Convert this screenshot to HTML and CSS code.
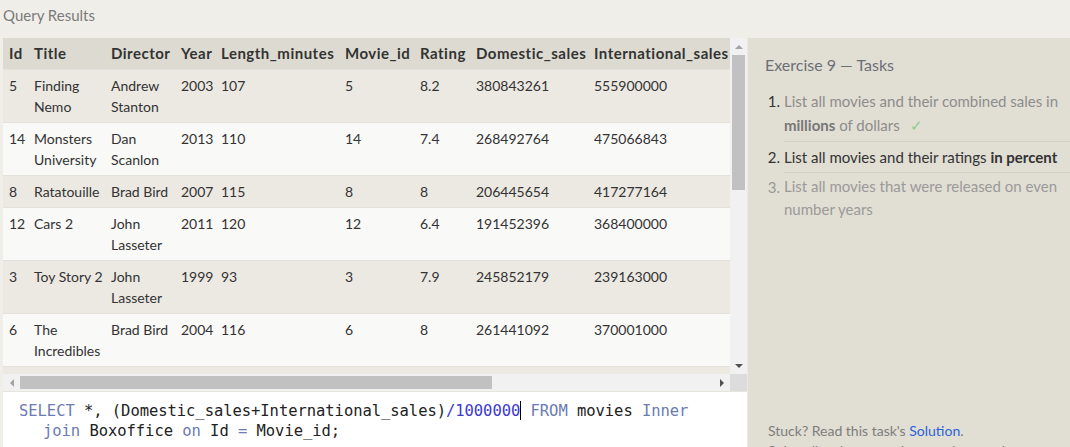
FILE: index.html
```html
<!DOCTYPE html>
<html>
<head>
<meta charset="utf-8">
<link rel="stylesheet" href="styles.css">
</head>
<body>
<div class="topbar">Query Results</div>
<div class="main">
  <div class="left">
    <div class="results">
      <div class="viewport">
        <table class="grid">
          <colgroup>
            <col class="c-id"><col class="c-title"><col class="c-dir"><col class="c-year"><col class="c-len"><col class="c-mid"><col class="c-rat"><col class="c-dom"><col class="c-int"><col class="c-tot">
          </colgroup>
          <thead>
            <tr><th>Id</th><th>Title</th><th>Director</th><th>Year</th><th>Length_minutes</th><th>Movie_id</th><th>Rating</th><th>Domestic_sales</th><th>International_sales</th><th>(Domestic_sales+International_sales)/1000000</th></tr>
          </thead>
          <tbody>
            <tr><td>5</td><td>Finding Nemo</td><td>Andrew Stanton</td><td>2003</td><td>107</td><td>5</td><td>8.2</td><td>380843261</td><td>555900000</td><td>936</td></tr>
            <tr><td>14</td><td>Monsters University</td><td>Dan Scanlon</td><td>2013</td><td>110</td><td>14</td><td>7.4</td><td>268492764</td><td>475066843</td><td>743</td></tr>
            <tr><td>8</td><td>Ratatouille</td><td>Brad Bird</td><td>2007</td><td>115</td><td>8</td><td>8</td><td>206445654</td><td>417277164</td><td>623</td></tr>
            <tr><td>12</td><td>Cars 2</td><td>John Lasseter</td><td>2011</td><td>120</td><td>12</td><td>6.4</td><td>191452396</td><td>368400000</td><td>559</td></tr>
            <tr><td>3</td><td>Toy Story 2</td><td>John Lasseter</td><td>1999</td><td>93</td><td>3</td><td>7.9</td><td>245852179</td><td>239163000</td><td>485</td></tr>
            <tr><td>6</td><td>The Incredibles</td><td>Brad Bird</td><td>2004</td><td>116</td><td>6</td><td>8</td><td>261441092</td><td>370001000</td><td>631</td></tr>
            <tr><td>9</td><td>WALL-E</td><td>Andrew Stanton</td><td>2008</td><td>104</td><td>9</td><td>8.5</td><td>223808164</td><td>297503696</td><td>521</td></tr>
          </tbody>
        </table>
      </div>
      <div class="vbar">
        <div class="arrow up"></div>
        <div class="vtrack"><div class="vthumb"></div></div>
        <div class="arrow down"></div>
      </div>
      <div class="hbar">
        <div class="arrow lft"></div>
        <div class="htrack"><div class="hthumb"></div></div>
        <div class="arrow rgt"></div>
      </div>
      <div class="corner"></div>
    </div>
    <div class="editor">
      <div class="code"><span class="kw">SELECT</span> *, (Domestic_sales+International_sales)<span class="num">/1000000</span><span class="caret"></span> <span class="kw">FROM</span> movies <span class="kw">Inner</span></div>
      <div class="code wrap"><span class="kw">join</span> Boxoffice <span class="kw">on</span> Id <span class="kw">=</span> Movie_id;</div>
    </div>
  </div>
  <div class="panel">
    <div class="ptitle">Exercise 9 — Tasks</div>
    <ol class="tasks">
      <li class="done"><span class="n">1.</span><div class="tx">List all movies and their combined sales in <b>millions</b> of dollars <span class="check">✓</span></div></li>
      <li class="active"><span class="n">2.</span><div class="tx">List all movies and their ratings <b>in percent</b></div></li>
      <li class="todo"><span class="n">3.</span><div class="tx">List all movies that were released on even number years</div></li>
    </ol>
    <div class="footer">
      <p>Stuck? Read this task's <span class="link">Solution</span>.</p>
      <p>Solve all tasks to continue to the next lesson.</p>
    </div>
  </div>
</div>
</body>
</html>
```

FILE: styles.css
```css
html, body {
  margin: 0;
  padding: 0;
}
body {
  background: #f0eee8;
  font-family: Lato, "Open Sans", sans-serif;
  width: 1070px;
  height: 447px;
  overflow: hidden;
}
.topbar {
  height: 38px;
  box-sizing: border-box;
  padding: 5px 0 0 3px;
  font-size: 15px;
  line-height: 20px;
  color: #7b7b7b;
}
.main {
  display: flex;
  height: 409px;
}
.left {
  width: 744px;
  margin-left: 3px;
  display: flex;
  flex-direction: column;
}
.results {
  height: 354px;
  display: grid;
  grid-template-columns: 727px 17px;
  grid-template-rows: 336px 18px;
}
.viewport {
  overflow: hidden;
  background: #f9f9f8;
}
.grid {
  border-collapse: collapse;
  table-layout: fixed;
  width: 1060px;
  font-size: 14px;
  line-height: 21px;
  color: #333;
}
.c-id { width: 25px; }
.c-title { width: 77px; }
.c-dir { width: 70px; }
.c-year { width: 40px; }
.c-len { width: 124px; }
.c-mid { width: 75px; }
.c-rat { width: 56px; }
.c-dom { width: 118px; }
.c-int { width: 150px; }
.c-tot { width: 325px; }
.grid th {
  background: #dddbd1;
  text-align: left;
  font-weight: bold;
  font-size: 15px;
  letter-spacing: 0.5px;
  padding: 5px 0 5px 6px;
  white-space: nowrap;
  overflow: hidden;
  color: #333;
}
.grid td {
  padding: 5px 0 5px 6px;
  vertical-align: top;
  border-top: 1px solid #e3e1da;
}
.grid tbody tr:nth-child(odd) td { background: #ebe9e2; }
.grid tbody tr:nth-child(even) td { background: #f9f9f8; }

.vbar {
  background: #f1f1f1;
  display: flex;
  flex-direction: column;
  align-items: center;
}
.vtrack { flex: 1; width: 100%; }
.vthumb {
  margin: 0 2px;
  height: 135px;
  background: #c1c1c1;
}
.hbar {
  background: #f1f1f1;
  display: flex;
  align-items: center;
  border-bottom: 1px solid #e6e4dd;
}
.htrack { flex: 1; height: 100%; display: flex; align-items: center; }
.hthumb {
  width: 472px;
  height: 13px;
  background: #c1c1c1;
}
.corner { background: #dcdcdc; border-bottom: 1px solid #e6e4dd; }
.arrow {
  width: 17px;
  height: 17px;
  flex: none;
  display: flex;
  align-items: center;
  justify-content: center;
}
.arrow::before {
  content: "";
  width: 0;
  height: 0;
  border: 4px solid transparent;
}
.up::before { border-bottom-color: #a3a3a3; border-top-width: 0; }
.down::before { border-top-color: #505050; border-bottom-width: 0; }
.lft::before { border-right-color: #a3a3a3; border-left-width: 0; }
.rgt::before { border-left-color: #505050; border-right-width: 0; }

.editor {
  flex: 1;
  background: #ffffff;
  padding-top: 9px;
  box-sizing: border-box;
}
.code {
  font-family: "DejaVu Sans Mono", "Liberation Mono", monospace;
  font-size: 15.5px;
  line-height: 20px;
  color: #222;
  padding-left: 16px;
  white-space: pre;
  letter-spacing: -0.05px;
}
.code.wrap { padding-left: 40px; }
.kw { color: #6b7bb3; }
.num { color: #3a3ad0; }
.caret {
  display: inline-block;
  width: 1px;
  height: 19px;
  background: #000;
  vertical-align: -4px;
}

.panel {
  flex: 1;
  background: #e1ded3;
  border-left: 1px solid #ebe9e2;
  display: flex;
  flex-direction: column;
  overflow: hidden;
  padding-left: 17px;
}
.ptitle {
  font-size: 16px;
  color: #6c6e78;
  margin-top: 16px;
  line-height: 22px;
}
.tasks {
  list-style: none;
  margin: 13px 0 0 0;
  padding: 0;
  font-size: 15px;
  line-height: 24px;
}
.tasks li {
  display: flex;
}
.tasks .n {
  width: 15px;
  flex: none;
  text-align: right;
  margin-right: 4px;
}
.tasks .tx {
  flex: 1;
  border-bottom: 1px solid #d3d0c4;
  padding-bottom: 4px;
  margin-bottom: 3px;
}
.tasks li.active .tx { padding-bottom: 3px; margin-bottom: 2px; }
.tasks li:last-child .tx { border-bottom: none; line-height: 23px; }
.done .n { color: #333; }
.done .tx { color: #8d8d8d; }
.done b { color: #777; }
.check { color: #8ecb8e; margin-left: 6px; }
.active { color: #333; }
.active b { color: #333; }
.todo { color: #9a9a9a; }
.footer {
  margin-top: auto;
  margin-bottom: -14px;
  padding-left: 3px;
  font-size: 14px;
  line-height: 20px;
  color: #7d7d7d;
}
.footer p { margin: 0; }
.link { color: #2b62d8; }
```
